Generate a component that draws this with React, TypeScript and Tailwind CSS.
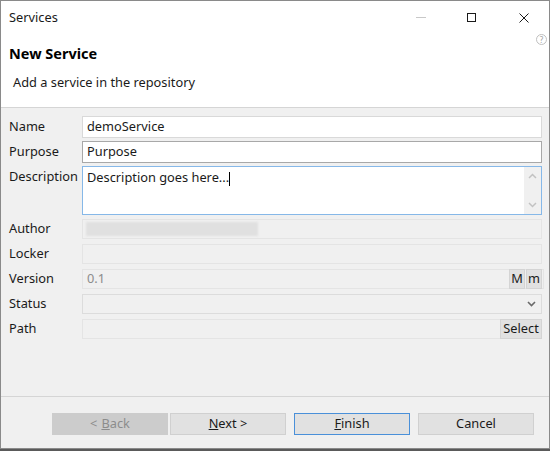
import React from 'react';

const font = { fontFamily: '"Noto Sans", "Open Sans", Arial, sans-serif' };

function Row({ label, children, tall }: { label: string; children: React.ReactNode; tall?: boolean }) {
    return (
        <div className={`flex ${tall ? 'items-start' : 'items-center'}`}>
            <div className={`w-[73px] shrink-0 text-[12.8px] text-[#1a1a1a] ${tall ? 'pt-[1px]' : ''}`}>{label}</div>
            <div className="flex-1 min-w-0">{children}</div>
        </div>
    );
}

function SmallBtn({ children, w }: { children: React.ReactNode; w: string }) {
    return (
        <div className={`h-[20px] ${w} flex items-center justify-center bg-[#e1e1e1] border border-[#d4d4d4] text-[12.8px] text-[#1a1a1a]`}>
            {children}
        </div>
    );
}

function WizardBtn({ children, state }: { children: React.ReactNode; state?: 'disabled' | 'default' }) {
    const cls =
        state === 'disabled'
            ? 'bg-[#cccccc] border-[#cccccc] text-[#8c8c8c]'
            : state === 'default'
            ? 'bg-[#e1e1e1] border-[#4a90d9] text-[#1a1a1a]'
            : 'bg-[#e1e1e1] border-[#d0d0d0] text-[#1a1a1a]';
    return (
        <div className={`w-[116px] h-[22px] flex items-center justify-center border text-[12.8px] ${cls}`}>
            {children}
        </div>
    );
}

export default function App() {
    return (
        <div className="w-[550px] h-[451px] bg-[#5a5a5a] overflow-hidden" style={font}>
            <div className="w-[550px] h-[449px] flex flex-col border border-[#8a8a8a] bg-[#f0f0f0]">
                {/* title bar */}
                <div className="h-[33px] bg-white flex items-center pl-[8px] shrink-0">
                    <span className="text-[12.8px] text-[#1a1a1a]">Services</span>
                    <div className="ml-auto flex items-center h-full">
                        <div className="w-[46px] flex justify-center"><div className="w-[10px] h-px bg-[#c8c8c8]" /></div>
                        <div className="w-[55px] flex justify-center"><div className="w-[9px] h-[9px] border border-[#1a1a1a]" /></div>
                        <div className="w-[50px] flex justify-center">
                            <svg width="10" height="10" viewBox="0 0 10 10"><path d="M0.5 0.5 L9.5 9.5 M9.5 0.5 L0.5 9.5" stroke="#1a1a1a" strokeWidth="1" /></svg>
                        </div>
                    </div>
                </div>
                {/* header */}
                <div className="h-[74px] bg-white relative shrink-0 border-b border-[#d5d5d5]">
                    <div className="absolute right-[2px] top-[0px] w-[11px] h-[11px] rounded-full border border-[#c0c0c0] flex items-center justify-center text-[8px] text-[#a0a0a0] leading-none">?</div>
                    <div className="pl-[8px] pt-[9px] text-[14.5px] font-bold text-black">New Service</div>
                    <div className="pl-[12px] pt-[8px] text-[12.8px] text-[#1a1a1a]">Add a service in the repository</div>
                </div>
                {/* form */}
                <div className="flex flex-col pl-[8px] pr-[7px] pt-[8px]">
                    <div className="flex flex-col gap-[3px]">
                        <Row label="Name">
                            <div className="h-[22px] bg-white border border-[#d9d9d9] px-[4px] flex items-center text-[12.8px] text-[#1a1a1a]">demoService</div>
                        </Row>
                        <Row label="Purpose">
                            <div className="h-[22px] bg-white border border-[#a8a8a8] px-[4px] flex items-center text-[12.8px] text-[#1a1a1a]">Purpose</div>
                        </Row>
                        <Row label="Description" tall>
                            <div className="h-[49px] bg-white border border-[#86b8e8] flex">
                                <div className="flex-1 px-[4px] pt-[1px] text-[12.8px] text-[#1a1a1a]">
                                    Description goes here...<span className="inline-block w-px h-[14px] bg-black align-middle" />
                                </div>
                                <div className="w-[17px] bg-[#f0f0f0] flex flex-col items-center justify-between py-[6px]">
                                    <svg width="9" height="6" viewBox="0 0 9 6"><path d="M1 5 L4.5 1.5 L8 5" stroke="#c2c2c2" strokeWidth="1.5" fill="none" /></svg>
                                    <svg width="9" height="6" viewBox="0 0 9 6"><path d="M1 1 L4.5 4.5 L8 1" stroke="#c2c2c2" strokeWidth="1.5" fill="none" /></svg>
                                </div>
                            </div>
                        </Row>
                    </div>
                    <div className="flex flex-col gap-[5px] mt-[4px]">
                        <Row label="Author">
                            <div className="h-[20px] bg-[#f0f0f0] border border-[#e4e4e4] px-[3px] flex items-center">
                                <div className="w-[172px] h-[14px] bg-[#e0e0e0] blur-[1px]" />
                            </div>
                        </Row>
                        <Row label="Locker">
                            <div className="h-[20px] bg-[#f0f0f0] border border-[#e4e4e4]" />
                        </Row>
                        <Row label="Version">
                            <div className="flex items-center">
                                <div className="flex-1 h-[20px] bg-[#f0f0f0] border border-[#e4e4e4] px-[4px] flex items-center text-[12.8px] text-[#8c8c8c]">0.1</div>
                                <div className="flex ml-[-35px] gap-px">
                                    <SmallBtn w="w-[16px]">M</SmallBtn>
                                    <SmallBtn w="w-[16px]">m</SmallBtn>
                                </div>
                            </div>
                        </Row>
                        <Row label="Status">
                            <div className="h-[20px] bg-[#f0f0f0] border border-[#dcdcdc] flex items-center justify-end pr-[5px]">
                                <svg width="9" height="6" viewBox="0 0 9 6"><path d="M1 1 L4.5 4.5 L8 1" stroke="#6a6a6a" strokeWidth="1.6" fill="none" /></svg>
                            </div>
                        </Row>
                        <Row label="Path">
                            <div className="flex items-center">
                                <div className="flex-1 h-[20px] bg-[#f0f0f0] border border-[#e4e4e4]" />
                                <div className="ml-[-42px]">
                                    <SmallBtn w="w-[42px]">Select</SmallBtn>
                                </div>
                            </div>
                        </Row>
                    </div>
                </div>
                <div className="flex-1" />
                {/* footer */}
                <div className="border-t border-[#d5d5d5] h-[52px] flex items-start pt-[16px] pl-[51px] shrink-0">
                    <WizardBtn state="disabled">&lt; <span className="underline ml-[4px]">B</span>ack</WizardBtn>
                    <div className="w-[2px]" />
                    <WizardBtn><span className="underline">N</span>ext &gt;</WizardBtn>
                    <div className="w-[8px]" />
                    <WizardBtn state="default"><span className="underline">F</span>inish</WizardBtn>
                    <div className="w-[8px]" />
                    <WizardBtn>Cancel</WizardBtn>
                </div>
            </div>
        </div>
    );
}
